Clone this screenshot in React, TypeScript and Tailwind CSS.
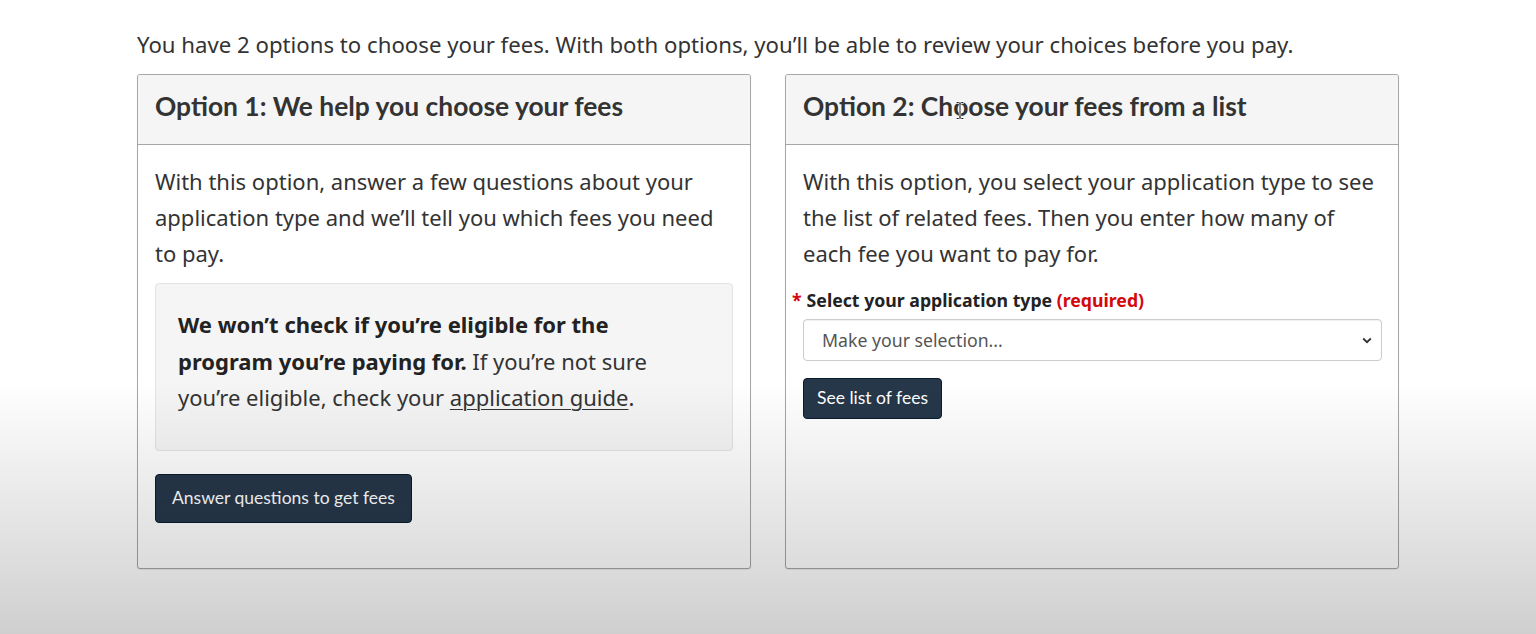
import React from "react";

const body = "font-['Noto_Sans',sans-serif]";
const lato = "font-['Lato',sans-serif]";

function IBeam() {
  return (
    <svg
      className="pointer-events-none absolute left-[955px] top-[101px]"
      width="10"
      height="19"
      viewBox="0 0 10 19"
    >
      <path
        d="M2 1.5h1.5C4.5 1.5 5 2 5 3M8 1.5H6.5C5.5 1.5 5 2 5 3v13c0 1-.5 1.5-1.5 1.5H2M5 16c0 1 .5 1.5 1.5 1.5H8"
        fill="none"
        stroke="#fff"
        strokeWidth="2.4"
        strokeLinecap="round"
      />
      <path
        d="M2 1.5h1.5C4.5 1.5 5 2 5 3M8 1.5H6.5C5.5 1.5 5 2 5 3v13c0 1-.5 1.5-1.5 1.5H2M5 16c0 1 .5 1.5 1.5 1.5H8"
        fill="none"
        stroke="#222"
        strokeWidth="1"
        strokeLinecap="round"
      />
    </svg>
  );
}

export default function App() {
  return (
    <div className={`relative h-[634px] w-full overflow-hidden bg-white text-[#333] ${body}`}>
      <div className="mx-auto w-[1262px] pt-[28px]">
        <p className="text-[22.2px] leading-[33px] text-[#333]">
          You have 2 options to choose your fees. With both options, you’ll be able to review your choices before you pay.
        </p>
        <div className="mt-[13px] flex gap-[34px]">
          {/* Option 1 */}
          <section className="flex w-[614px] flex-col rounded-[3px] border border-[#a6a6a6] bg-white shadow-[0_1px_1px_rgba(0,0,0,0.08)]">
            <header className="rounded-t-[3px] border-b border-[#a6a6a6] bg-[#f5f5f5] px-[17px] pt-[17px] pb-[23px]">
              <h2 className={`${lato} text-[26.4px] font-bold leading-[29px] text-[#333]`}>
                Option 1: We help you choose your fees
              </h2>
            </header>
            <div className="px-[17px] pt-[18px] pb-[45px]">
              <p className="text-[22px] leading-[36px]">
                With this option, answer a few questions about your application type and we’ll tell you which fees you need to pay.
              </p>
              <div className="mt-[12px] rounded-[4px] border border-[#e3e3e3] bg-[#f5f5f5] pl-[22px] pr-[40px] pt-[22px] pb-[34px]">
                <p className="text-[22px] leading-[36.5px]">
                  <strong className="font-bold text-[#222]">We won’t check if you’re eligible for the program you’re paying for.</strong>{" "}
                  If you’re not sure you’re eligible, check your{" "}
                  <a href="#" className="text-[#333] underline decoration-1 underline-offset-[3px]">
                    application guide
                  </a>
                  .
                </p>
              </div>
              <button
                className={`${lato} mt-[23px] h-[49px] rounded-[4px] border border-[#091c2d] bg-[#26374a] px-[16px] text-[17.5px] text-white`}
              >
                Answer questions to get fees
              </button>
            </div>
          </section>

          {/* Option 2 */}
          <section className="relative flex w-[614px] flex-col rounded-[3px] border border-[#a6a6a6] bg-white shadow-[0_1px_1px_rgba(0,0,0,0.08)]">
            <header className="rounded-t-[3px] border-b border-[#a6a6a6] bg-[#f5f5f5] px-[17px] pt-[17px] pb-[23px]">
              <h2 className={`${lato} text-[26.4px] font-bold leading-[29px] text-[#333]`}>
                Option 2: Choose your fees from a list
              </h2>
            </header>
            <div className="px-[17px] pt-[18px]">
              <p className="text-[22px] leading-[36px]">
                With this option, you select your application type to see the list of related fees. Then you enter how many of each fee you want to pay for.
              </p>
              <label className="mt-[17px] block text-[17.7px] font-bold leading-[24px] text-[#222]">
                <span className="ml-[-11px] mr-[5px] text-[#d3080c]">*</span>
                Select your application type <span className="text-[#d3080c]">(required)</span>
              </label>
              <div className="mt-[7px] flex h-[42px] w-[579px] items-center justify-between rounded-[4px] border border-[#ccc] bg-white pl-[18px] pr-[9px] shadow-[inset_0_1px_1px_rgba(0,0,0,0.06)]">
                <span className="text-[17.7px] text-[#555]">Make your selection...</span>
                <svg width="10" height="7" viewBox="0 0 10 7">
                  <path d="M1.2 1.5 5 5.2 8.8 1.5" fill="none" stroke="#333" strokeWidth="1.8" />
                </svg>
              </div>
              <button
                className={`${lato} mt-[17px] h-[41px] rounded-[4px] border border-[#091c2d] bg-[#26374a] px-[13px] text-[17.5px] text-white`}
              >
                See list of fees
              </button>
            </div>
          </section>
        </div>
      </div>
      <IBeam />
      <div className="pointer-events-none absolute inset-0 bg-[linear-gradient(to_bottom,rgba(0,0,0,0)_0%,rgba(0,0,0,0)_60%,rgba(0,0,0,0.19)_100%)]" />
    </div>
  );
}
